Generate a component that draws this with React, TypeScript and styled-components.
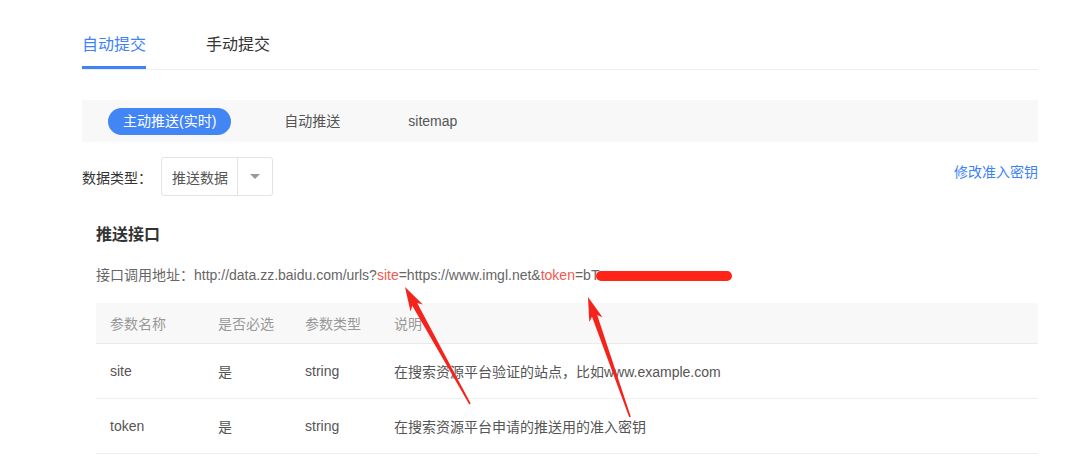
import React from "react";
import styled, { createGlobalStyle } from "styled-components";

const GlobalStyle = createGlobalStyle`
  html, body { margin: 0; padding: 0; background: #fff; }
  body {
    font-family: "Liberation Sans", "Noto Sans CJK SC", sans-serif;
    color: #666;
  }
  * { box-sizing: border-box; }
`;

const Page = styled.div`
  position: relative;
  width: 1066px;
  height: 475px;
  overflow: hidden;
  padding: 26px 28px 0 82px;
`;

const Tabs = styled.div`
  display: flex;
  gap: 60px;
  height: 44px;
  border-bottom: 1px solid #eeeeee;
  padding-top: 8px;
`;

const Tab = styled.div<{ $active?: boolean }>`
  font-size: 16px;
  line-height: 22px;
  padding-bottom: 10px;
  height: 35px;
  color: ${(p) => (p.$active ? "#3d82f6" : "#333")};
  border-bottom: 3px solid ${(p) => (p.$active ? "#3d82f6" : "transparent")};
`;

const SubNav = styled.div`
  margin-top: 30px;
  height: 42px;
  background: #f8f8f8;
  display: flex;
  align-items: center;
  gap: 38px;
  padding-left: 26px;
`;

const SubItem = styled.div<{ $active?: boolean }>`
  height: 27px;
  line-height: 27px;
  padding: 0 15px;
  border-radius: 14px;
  font-size: 14px;
  color: ${(p) => (p.$active ? "#fff" : "#555")};
  background: ${(p) => (p.$active ? "#4285f4" : "transparent")};
`;

const FilterRow = styled.div`
  margin-top: 15px;
  display: flex;
  align-items: center;
`;

const Label = styled.span`
  font-size: 14px;
  color: #333;
  margin-right: 9px;
`;

const Select = styled.div`
  display: flex;
  height: 39px;
  border: 1px solid #e3e3e3;
  border-radius: 3px;
  font-size: 14px;
  color: #555;
`;

const SelectValue = styled.div`
  display: flex;
  align-items: center;
  padding: 0 9px 0 10px;
  border-right: 1px solid #e3e3e3;
`;

const SelectCaret = styled.div`
  width: 34px;
  display: flex;
  align-items: center;
  justify-content: center;
  &::after {
    content: "";
    border-left: 5px solid transparent;
    border-right: 5px solid transparent;
    border-top: 5px solid #999;
  }
`;

const Spacer = styled.div`
  flex: 1;
`;

const Link = styled.a`
  font-size: 14px;
  color: #3d82f6;
  text-decoration: none;
  align-self: flex-start;
  margin-top: 4px;
`;

const Section = styled.div`
  padding-left: 14px;
`;

const Title = styled.h3`
  margin: 28px 0 0;
  font-size: 16px;
  line-height: 22px;
  font-weight: bold;
  color: #333;
`;

const UrlLine = styled.div`
  margin-top: 19px;
  font-size: 14px;
  line-height: 20px;
  color: #666;
  white-space: nowrap;
`;

const Param = styled.span`
  color: #f2594f;
`;

const Redact = styled.span`
  display: inline-block;
  width: 136px;
  height: 10px;
  border-radius: 5px;
  background: #ff2318;
  vertical-align: middle;
  margin-left: -3px;
`;

const Table = styled.div`
  margin-top: 18px;
  display: grid;
  grid-template-columns: 108px 87px 89px 1fr;
  font-size: 14px;
`;

const HeadCell = styled.div`
  height: 41px;
  display: flex;
  align-items: center;
  padding-left: 14px;
  background: #f8f8f8;
  color: #999;
  border-bottom: 1px solid #ebebeb;
`;

const Cell = styled.div`
  height: 55px;
  display: flex;
  align-items: center;
  padding-left: 14px;
  color: #555;
  border-bottom: 1px solid #eeeeee;
`;

const Overlay = styled.svg`
  position: absolute;
  left: 0;
  top: 0;
  pointer-events: none;
`;

function arrowPoints(tip: [number, number], tail: [number, number]): string {
  const dx = tip[0] - tail[0];
  const dy = tip[1] - tail[1];
  const len = Math.hypot(dx, dy);
  const ux = dx / len;
  const uy = dy / len;
  const nx = -uy;
  const ny = ux;
  const headLen = 24;
  const headW = 7;
  const neckW = 2.8;
  const notch = 4;
  const bx = tip[0] - ux * headLen;
  const by = tip[1] - uy * headLen;
  const nbx = bx + ux * notch;
  const nby = by + uy * notch;
  const pts: [number, number][] = [
    [tip[0], tip[1]],
    [bx + nx * headW, by + ny * headW],
    [nbx + nx * neckW, nby + ny * neckW],
    [tail[0] + nx * 0.8, tail[1] + ny * 0.8],
    [tail[0] - nx * 0.8, tail[1] - ny * 0.8],
    [nbx - nx * neckW, nby - ny * neckW],
    [bx - nx * headW, by - ny * headW],
  ];
  return pts.map((p) => `${p[0].toFixed(1)},${p[1].toFixed(1)}`).join(" ");
}

const rows = [
  { name: "site", req: "是", type: "string", desc: "在搜索资源平台验证的站点，比如www.example.com" },
  { name: "token", req: "是", type: "string", desc: "在搜索资源平台申请的推送用的准入密钥" },
];

export default function App() {
  return (
    <>
      <GlobalStyle />
      <Page>
        <Tabs>
          <Tab $active>自动提交</Tab>
          <Tab>手动提交</Tab>
        </Tabs>
        <SubNav>
          <SubItem $active>主动推送(实时)</SubItem>
          <SubItem>自动推送</SubItem>
          <SubItem>sitemap</SubItem>
        </SubNav>
        <FilterRow>
          <Label>数据类型：</Label>
          <Select>
            <SelectValue>推送数据</SelectValue>
            <SelectCaret />
          </Select>
          <Spacer />
          <Link href="#">修改准入密钥</Link>
        </FilterRow>
        <Section>
          <Title>推送接口</Title>
          <UrlLine>
            接口调用地址：http://data.zz.baidu.com/urls?<Param>site</Param>=https://www.imgl.net&amp;
            <Param>token</Param>=bT<Redact />
          </UrlLine>
          <Table>
            <HeadCell>参数名称</HeadCell>
            <HeadCell>是否必选</HeadCell>
            <HeadCell>参数类型</HeadCell>
            <HeadCell>说明</HeadCell>
            {rows.map((r) => (
              <React.Fragment key={r.name}>
                <Cell>{r.name}</Cell>
                <Cell>{r.req}</Cell>
                <Cell>{r.type}</Cell>
                <Cell>{r.desc}</Cell>
              </React.Fragment>
            ))}
          </Table>
        </Section>
        <Overlay width={1066} height={475} viewBox="0 0 1066 475">
          <polygon points={arrowPoints([405, 287], [470, 404])} fill="#f4231b" />
          <polygon points={arrowPoints([588, 297], [630, 417])} fill="#f4231b" />
        </Overlay>
      </Page>
    </>
  );
}
